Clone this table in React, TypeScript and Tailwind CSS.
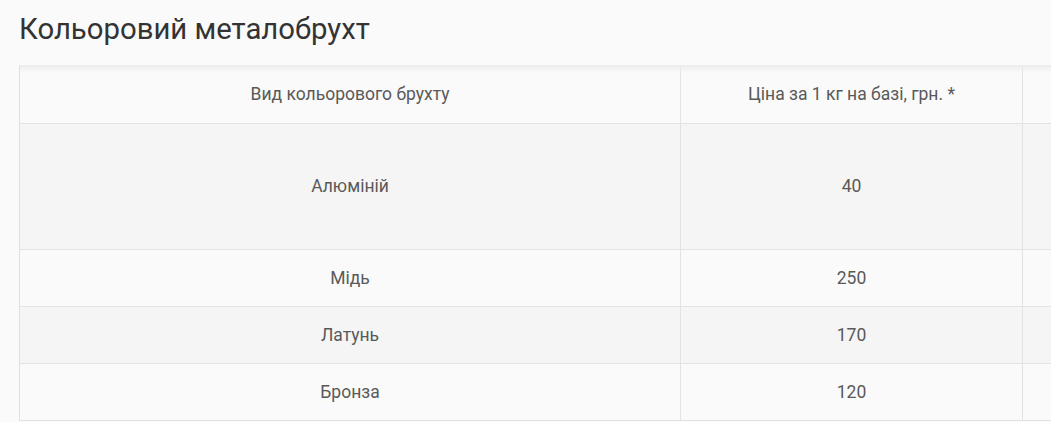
const rows = [
  { name: "Алюміній", price: "40", tall: true },
  { name: "Мідь", price: "250" },
  { name: "Латунь", price: "170" },
  { name: "Бронза", price: "120" },
];

const App = () => {
  return (
    <div className="w-[1051px] h-[422px] overflow-hidden bg-[#fafafa] font-['Roboto',sans-serif]">
      <h1 className="pl-[19px] pt-[9px] h-[65px] text-[29.3px] leading-[40px] text-[#333333] font-normal">
        Кольоровий металобрухт
      </h1>
      <div className="ml-[19px] w-[1100px] relative border-l border-[#e0e0e0]">
        <div className="absolute inset-x-0 top-0 h-[8px] bg-gradient-to-b from-[#ececec] to-transparent pointer-events-none" />
        <div className="flex h-[59px] bg-[#fafafa] border-b border-[#e3e3e3] text-[17.5px] text-[#595959]">
          <div className="w-[661px] flex items-center justify-center border-r border-[#e3e3e3]">
            Вид кольорового брухту
          </div>
          <div className="w-[342px] flex items-center justify-center border-r border-[#e3e3e3]">
            Ціна за 1 кг на базі, грн. *
          </div>
          <div className="flex-1" />
        </div>
        {rows.map((r, i) => (
          <div
            key={r.name}
            className={`flex border-b border-[#e3e3e3] text-[17.5px] text-[#595959] ${
              r.tall ? "h-[126px]" : "h-[57px]"
            } ${i % 2 === 0 ? "bg-[#f5f5f5]" : "bg-[#fafafa]"}`}
          >
            <div className="w-[661px] flex items-center justify-center border-r border-[#e3e3e3]">
              {r.name}
            </div>
            <div className="w-[342px] flex items-center justify-center border-r border-[#e3e3e3]">
              {r.price}
            </div>
            <div className="flex-1" />
          </div>
        ))}
      </div>
    </div>
  );
};

export default App;
